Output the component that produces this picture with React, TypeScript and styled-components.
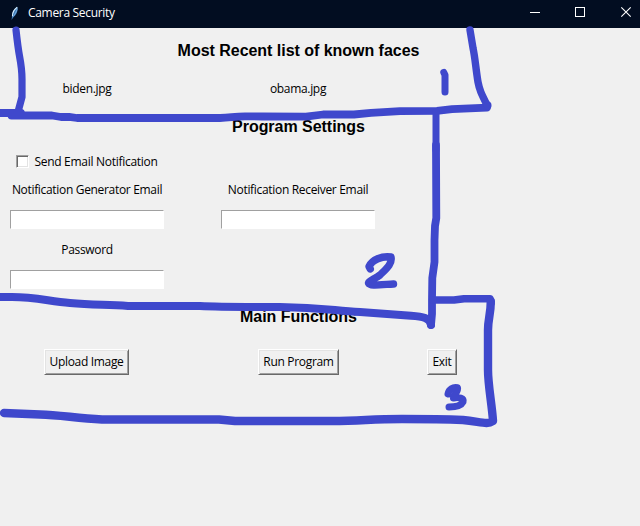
import React from 'react';
import styled, { createGlobalStyle } from 'styled-components';

const GlobalStyle = createGlobalStyle`
  * { box-sizing: border-box; }
  html, body { margin: 0; padding: 0; background: #f0f0f0; overflow: hidden; }
`;

const Window = styled.div`
  position: relative;
  display: flex;
  flex-direction: column;
  width: 640px;
  height: 526px;
  background: #f0f0f0;
  color: #000;
  font: 12px/16px 'Open Sans', 'Noto Sans', sans-serif;
  letter-spacing: -0.32px;
  white-space: nowrap;
`;

const TitleBar = styled.header`
  display: flex;
  align-items: center;
  flex: none;
  height: 28px;
  padding-left: 9px;
  background: #020d21;
  color: #fff;
`;

const TitleText = styled.span`
  flex: 1;
  margin: -2px 0 0 7px;
  letter-spacing: -0.32px;
`;

const WindowControls = styled.div`
  display: flex;
  height: 28px;
`;

const ControlButton = styled.div`
  width: 45px;
  height: 28px;
  &:last-child { width: 33px; }
  svg { display: block; }
`;

const Form = styled.main`
  display: grid;
  grid-template-columns: 174px 248px 40px;
  grid-template-rows: 44px 34px 40px 30px 28px 31px 30px 29px 44px 48px;
  place-items: center;
`;

const Heading = styled.h2<{ $row: number }>`
  grid-column: 2;
  grid-row: ${(p) => p.$row};
  margin: 0;
  padding: 2px 0 0 1px;
  font: bold 16px/20px 'Liberation Sans', Arial, sans-serif;
  letter-spacing: -0.03px;
`;

const Label = styled.span<{ $column: number; $row: number }>`
  grid-column: ${(p) => p.$column};
  grid-row: ${(p) => p.$row};
`;

const CheckRow = styled.label`
  grid-column: 1;
  grid-row: 4;
  display: flex;
  align-items: center;
  gap: 5px;
  letter-spacing: -0.28px;
  span { padding-top: 2px; }
`;

const CheckBox = styled.input`
  appearance: none;
  flex: none;
  width: 13px;
  height: 13px;
  margin: 0;
  background: #fff;
  border: 1px solid;
  border-color: #a0a0a0 #fff #fff #a0a0a0;
  box-shadow: inset 1px 1px #696969, inset -1px -1px #e3e3e3;
`;

const Entry = styled.input<{ $column: number; $row: number; $top: number }>`
  grid-column: ${(p) => p.$column};
  grid-row: ${(p) => p.$row};
  align-self: start;
  margin: ${(p) => p.$top}px 0 0;
  width: 154px;
  height: 19px;
  padding: 0 2px;
  border: 1px solid;
  border-color: #a0a0a0 #fff #fff #a0a0a0;
  border-radius: 0;
  background: #fff;
  font: inherit;
  outline: none;
`;

const Button = styled.button<{ $column: number; $width: number; $nudge?: number }>`
  grid-column: ${(p) => p.$column};
  grid-row: 10;
  display: flex;
  align-items: center;
  justify-content: center;
  width: ${(p) => p.$width}px;
  height: 26px;
  margin-left: ${(p) => p.$nudge ?? 0}px;
  padding: 0;
  border: 1px solid;
  border-color: #fff #696969 #696969 #fff;
  border-radius: 0;
  box-shadow: inset 1px 1px #e3e3e3, inset -1px -1px #a0a0a0;
  background: #f0f0f0;
  color: #000;
  font: inherit;
  letter-spacing: inherit;
`;

const InkLayer = styled.svg`
  position: absolute;
  inset: 0;
  pointer-events: none;
`;

const Feather = () => (
  <svg width="12" height="16" viewBox="0 0 12 16">
    <path d="M8.4 .8C5.4 2.3 3 5.6 3.1 10.2L2.5 14l1.7-2.6C7.4 9 9.3 4.8 8.4.8Z" fill="#3b78b8" />
    <path d="M8.2 1.2C5.2 3.3 3.4 6.3 3.4 10.2" fill="none" stroke="#d8ecfa" strokeWidth="1.1" />
    <path d="M8.3 2.5C7.5 6 5.7 8.5 4.3 10.5" fill="none" stroke="#8bbbe5" strokeWidth=".8" />
  </svg>
);

const Ink = () => (
  <InkLayer width="640" height="526" viewBox="0 0 640 526">
    <g fill="none" stroke="#3f48cc" strokeWidth="8" strokeLinecap="round" strokeLinejoin="round">
      <path d="M16 30C17 39 18 48 19.5 56C21 64 22 70 22 79V97L18.5 110" strokeWidth="7.2" />
      <path d="M-4 113H21M11.5 115.5H52L61 117L69 116.8L77 118H220C230 118 233 116.5 245 116.3L262 116.5L306 116.6L323 114.5H354L371 112.8L400 111.2L437 110.8L452 109.2L487 107.6L487.5 105" strokeWidth="7.8" />
      <path d="M487.5 106C481 93 479.5 90 478 82C476 70 475 57 473 48L470 30" strokeWidth="7.4" />
      <path d="M443.8 72.5L445 75V92" strokeWidth="7" />
      <path d="M436 112V150" strokeWidth="7" />
      <path d="M436 145L436.3 218L435 226L434.5 240V262L432.3 278L432 300V314L431 325" strokeWidth="7.8" />
      <path d="M-4 297H12C35 297 48 301 70 303C92 305 105 304.5 128 306H200C220 307 240 307 280 307C320 307.5 330 310 360 312L411 315.8C423 316.5 430 318 431 325" />
      <path d="M433 300H454L464 298.8H490L491 303" strokeWidth="7.6" />
      <path d="M490.8 301C490.8 314 488 319 488 330V370C488 385 492 405 493 421C487 425 482 422 463 420C440 419 428 419 402 419C370 419 362 421 332 421H235L219 419.5H102C75 418 60 415 40 414.5L4 413" strokeWidth="8.4" />
      <path d="M370.3 269L369 266.5C372 260 382 255.5 391 257C392.5 264 386 269 380 275C375 279 369 280.5 368.5 283C370 286 377 285 393.5 284" strokeWidth="7.4" />
      <path d="M448 394C449 389 453 387 457.5 387.8C458.5 391 454 395 453.5 398C459 397 464 398 463 402C461 406 455 407 449 407" strokeWidth="7" />
    </g>
  </InkLayer>
);

export default function App() {
  return (
    <Window>
      <GlobalStyle />
      <TitleBar>
        <Feather />
        <TitleText>Camera Security</TitleText>
        <WindowControls>
          <ControlButton aria-label="Minimize">
            <svg width="45" height="28"><path d="M13 12.5h10" stroke="#fff" /></svg>
          </ControlButton>
          <ControlButton aria-label="Maximize">
            <svg width="45" height="28"><rect x="13.5" y="7.5" width="9" height="9" fill="none" stroke="#fff" /></svg>
          </ControlButton>
          <ControlButton aria-label="Close">
            <svg width="33" height="28"><path d="M14.3 7.3l9.4 9.4M23.7 7.3l-9.4 9.4" stroke="#fff" strokeWidth="1.1" /></svg>
          </ControlButton>
        </WindowControls>
      </TitleBar>
      <Form>
        <Heading $row={1}>Most Recent list of known faces</Heading>
        <Label $column={1} $row={2}>biden.jpg</Label>
        <Label $column={2} $row={2}>obama.jpg</Label>
        <Heading $row={3}>Program Settings</Heading>
        <CheckRow>
          <CheckBox type="checkbox" />
          <span>Send Email Notification</span>
        </CheckRow>
        <Label $column={1} $row={5}>Notification Generator Email</Label>
        <Label $column={2} $row={5}>Notification Receiver Email</Label>
        <Entry $column={1} $row={6} $top={6} />
        <Entry $column={2} $row={6} $top={6} />
        <Label $column={1} $row={7}>Password</Label>
        <Entry $column={1} $row={8} $top={5} />
        <Heading $row={9}>Main Functions</Heading>
        <Button $column={1} $width={85} $nudge={-1}>Upload Image</Button>
        <Button $column={2} $width={81} $nudge={1}>Run Program</Button>
        <Button $column={3} $width={30}>Exit</Button>
      </Form>
      <Ink />
    </Window>
  );
}
